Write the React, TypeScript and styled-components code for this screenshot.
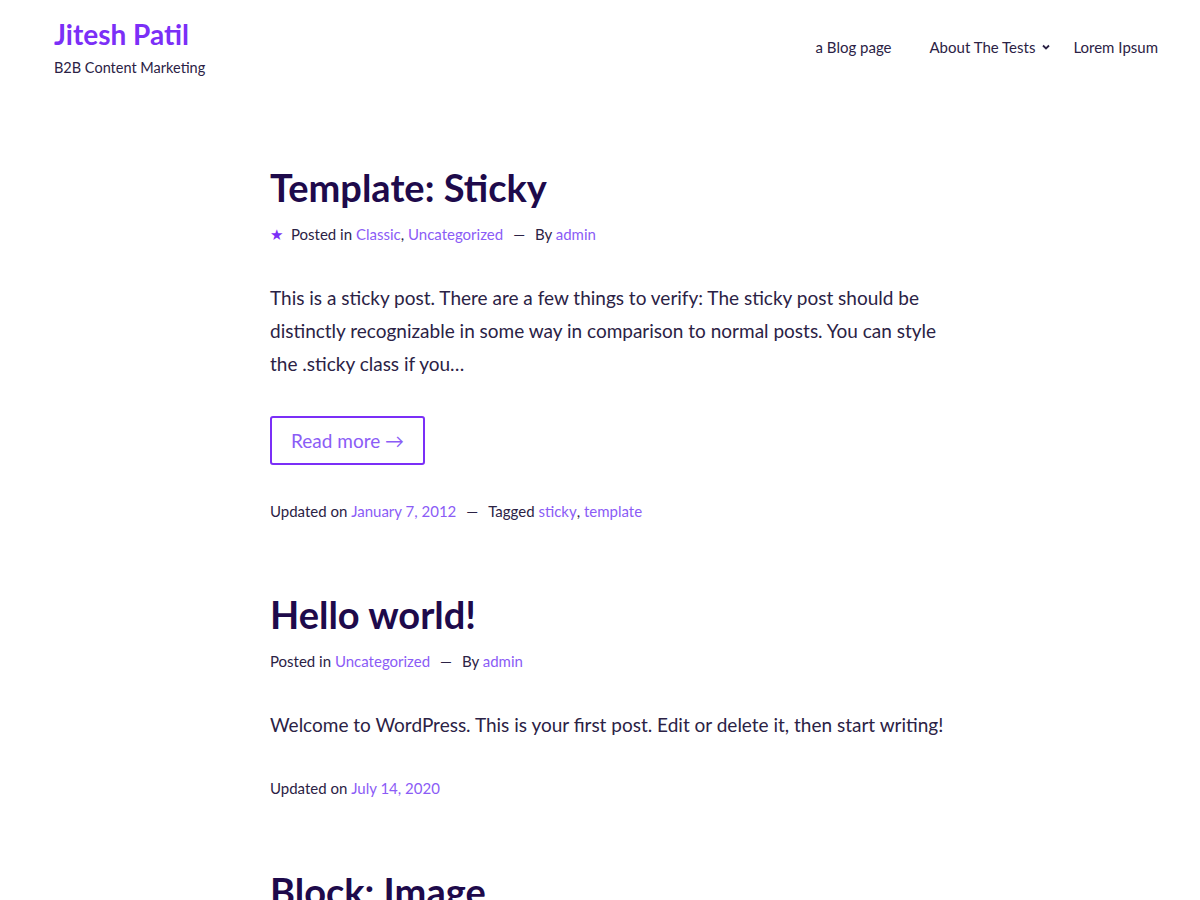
import React from "react";
import styled, { createGlobalStyle } from "styled-components";

const Global = createGlobalStyle`
  html, body { margin: 0; padding: 0; background: #fff; }
  body { font-family: Lato, "Open Sans", sans-serif; color: #2b2245; }
  a { text-decoration: none; }
`;

const Page = styled.div`
  width: 1200px;
  height: 900px;
  overflow: hidden;
`;

const Header = styled.header`
  display: flex;
  justify-content: space-between;
  align-items: flex-start;
  padding: 16px 42px 0 54px;
`;

const Branding = styled.div`
  display: flex;
  flex-direction: column;
`;

const SiteTitle = styled.a`
  font-size: 28px;
  font-weight: 700;
  color: #7b2ff7;
  line-height: 36px;
`;

const Tagline = styled.p`
  margin: 7px 0 0;
  font-size: 14.5px;
  color: #2b2245;
`;

const Nav = styled.nav`
  display: flex;
  align-items: center;
  gap: 22px;
  margin-top: 22px;
`;

const NavItem = styled.a<{ $after?: number }>`
  display: flex;
  align-items: center;
  gap: 6px;
  font-size: 15px;
  color: #2b2245;
  margin-right: ${(p) => p.$after ?? 0}px;
`;

const Main = styled.main`
  width: 690px;
  margin: 0 0 0 270px;
  padding-top: 87px;
`;

const Article = styled.article`
  margin-bottom: 67px;
`;

const Title = styled.h2`
  margin: 0;
  font-size: 38px;
  font-weight: 700;
  line-height: 48px;
  color: #1e0a4b;
`;

const Meta = styled.div`
  display: flex;
  align-items: center;
  font-size: 15px;
  color: #2b2245;
  margin-top: 11px;
  line-height: 24px;
`;

const Link = styled.a`
  color: #8b5cf6;
`;

const Dash = styled.span`
  margin: 0 10px;
`;

const Star = styled.span`
  color: #7b2ff7;
  font-size: 15px;
  margin: 0 8px 0 0;
`;

const Body = styled.p<{ $top: number }>`
  margin: ${(p) => p.$top}px 0 0;
  font-size: 19px;
  line-height: 33px;
  color: #2b2245;
`;

const ReadMore = styled.a`
  display: inline-block;
  margin-top: 36px;
  border: 2px solid #7b2ff7;
  border-radius: 3px;
  padding: 0 19px;
  height: 49px;
  box-sizing: border-box;
  line-height: 45px;
  font-size: 19px;
  color: #8b5cf6;
`;

const Footer = styled(Meta)<{ $top: number }>`
  margin-top: ${(p) => p.$top}px;
`;

export default function App() {
  return (
    <Page>
      <Global />
      <Header>
        <Branding>
          <SiteTitle>Jitesh Patil</SiteTitle>
          <Tagline>B2B Content Marketing</Tagline>
        </Branding>
        <Nav>
          <NavItem $after={16}>a Blog page</NavItem>
          <NavItem>
            About The Tests
            <svg width="10" height="10" viewBox="0 0 10 10">
              <path d="M2 3.5 L5 6.5 L8 3.5" stroke="#2b2245" strokeWidth="1.8" fill="none" />
            </svg>
          </NavItem>
          <NavItem>Lorem Ipsum</NavItem>
        </Nav>
      </Header>
      <Main>
        <Article>
          <Title>Template: Sticky</Title>
          <Meta>
            <Star>★</Star>
            Posted in&nbsp;<Link>Classic</Link>,&nbsp;<Link>Uncategorized</Link>
            <Dash>—</Dash>
            By&nbsp;<Link>admin</Link>
          </Meta>
          <Body $top={35}>
            This is a sticky post. There are a few things to verify: The sticky post should be
            distinctly recognizable in some way in comparison to normal posts. You can style
            the .sticky class if you…
          </Body>
          <ReadMore>Read more →</ReadMore>
          <Footer $top={34}>
            Updated on&nbsp;<Link>January 7, 2012</Link>
            <Dash>—</Dash>
            Tagged&nbsp;<Link>sticky</Link>,&nbsp;<Link>template</Link>
          </Footer>
        </Article>
        <Article>
          <Title>Hello world!</Title>
          <Meta>
            Posted in&nbsp;<Link>Uncategorized</Link>
            <Dash>—</Dash>
            By&nbsp;<Link>admin</Link>
          </Meta>
          <Body $top={35}>
            Welcome to WordPress. This is your first post. Edit or delete it, then start writing!
          </Body>
          <Footer $top={35}>
            Updated on&nbsp;<Link>July 14, 2020</Link>
          </Footer>
        </Article>
        <Article>
          <Title>Block: Image</Title>
        </Article>
      </Main>
    </Page>
  );
}
